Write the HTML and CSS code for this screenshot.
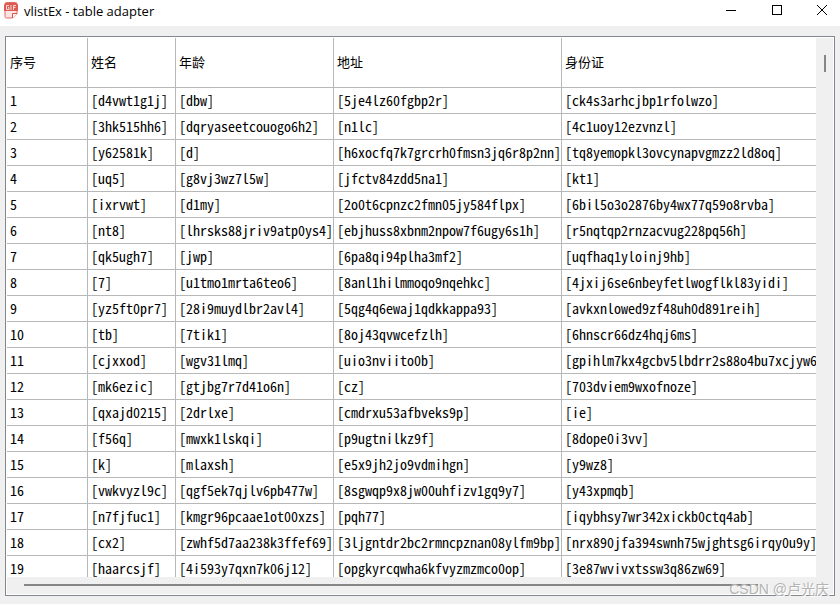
FILE: index.html
```
<!DOCTYPE html>
<html lang="zh-CN">
<head>
    <meta charset="utf-8">
    <title>vlistEx - table adapter</title>
    <link rel="stylesheet" href="styles.css">
</head>
<body>
    <!-- Title bar -->
    <header class="title-bar">
        <svg class="app-icon" width="14" height="17" viewBox="0 0 14 17">
            <path d="M2.500 .5h9a1.500 1.500 0 0 1 1.500 1.500v9.500L8.500 16h-6A1.500 1.500 0 0 1 1 14.500V2A1.500 1.500 0 0 1 2.500 .5z" fill="#fbe4e2" stroke="#e26a63"/>
            <path d="M2 1h10a1 1 0 0 1 1 1l1 1v6H0V3l1-1a1 1 0 0 1 1-1z" fill="#dd5a53"/>
            <path d="M5 3.500H2.500v4H5V5.500H4M7 3v5M9.500 8V3.500H12M9.500 5.500h2" fill="none" stroke="#fbd9d6"/>
            <path d="M8.500 16v-4.500H13" fill="#fff" stroke="#dd4f48"/>
        </svg>
        <h1>vlistEx - table adapter</h1>
        <div class="window-buttons">
            <button type="button" aria-label="Minimize">
                <svg width="12" height="12" viewBox="0 0 12 12"><path d="M1 6.500h10"/></svg>
            </button>
            <button type="button" aria-label="Maximize">
                <svg width="12" height="12" viewBox="0 0 12 12"><rect x="1.500" y="1.500" width="9" height="9"/></svg>
            </button>
            <button type="button" aria-label="Close">
                <svg width="12" height="12" viewBox="0 0 12 12"><path d="M1 1l10 10M11 1L1 11"/></svg>
            </button>
        </div>
    </header>

    <main class="list-box">
        <div class="list-view">
            <table>
                <colgroup>
                    <col class="col-index">
                    <col class="col-name">
                    <col class="col-age">
                    <col class="col-address">
                    <col>
                </colgroup>
                <thead>
                    <tr><th>序号</th><th>姓名</th><th>年龄</th><th>地址</th><th>身份证</th></tr>
                </thead>
                <tbody>
                    <tr><td>1</td><td>[d4vwt1g1j]</td><td>[dbw]</td><td>[5je4lz60fgbp2r]</td><td>[ck4s3arhcjbp1rfolwzo]</td></tr>
                    <tr><td>2</td><td>[3hk515hh6]</td><td>[dqryaseetcouogo6h2]</td><td>[n1lc]</td><td>[4c1uoy12ezvnzl]</td></tr>
                    <tr><td>3</td><td>[y62581k]</td><td>[d]</td><td>[h6xocfq7k7grcrh0fmsn3jq6r8p2nn]</td><td>[tq8yemopkl3ovcynapvgmzz2ld8oq]</td></tr>
                    <tr><td>4</td><td>[uq5]</td><td>[g8vj3wz7l5w]</td><td>[jfctv84zdd5na1]</td><td>[kt1]</td></tr>
                    <tr><td>5</td><td>[ixrvwt]</td><td>[d1my]</td><td>[2o0t6cpnzc2fmn05jy584flpx]</td><td>[6bil5o3o2876by4wx77q59o8rvba]</td></tr>
                    <tr><td>6</td><td>[nt8]</td><td>[lhrsks88jriv9atp0ys4]</td><td>[ebjhuss8xbnm2npow7f6ugy6s1h]</td><td>[r5nqtqp2rnzacvug228pq56h]</td></tr>
                    <tr><td>7</td><td>[qk5ugh7]</td><td>[jwp]</td><td>[6pa8qi94plha3mf2]</td><td>[uqfhaq1yloinj9hb]</td></tr>
                    <tr><td>8</td><td>[7]</td><td>[u1tmo1mrta6teo6]</td><td>[8anl1hilmmoqo9nqehkc]</td><td>[4jxij6se6nbeyfetlwogflkl83yidi]</td></tr>
                    <tr><td>9</td><td>[yz5ft0pr7]</td><td>[28i9muydlbr2avl4]</td><td>[5qg4q6ewaj1qdkkappa93]</td><td>[avkxnlowed9zf48uh0d891reih]</td></tr>
                    <tr><td>10</td><td>[tb]</td><td>[7tik1]</td><td>[8oj43qvwcefzlh]</td><td>[6hnscr66dz4hqj6ms]</td></tr>
                    <tr><td>11</td><td>[cjxxod]</td><td>[wgv31lmq]</td><td>[uio3nviito0b]</td><td>[gpihlm7kx4gcbv5lbdrr2s88o4bu7xcjyw6</td></tr>
                    <tr><td>12</td><td>[mk6ezic]</td><td>[gtjbg7r7d41o6n]</td><td>[cz]</td><td>[703dviem9wxofnoze]</td></tr>
                    <tr><td>13</td><td>[qxajd0215]</td><td>[2drlxe]</td><td>[cmdrxu53afbveks9p]</td><td>[ie]</td></tr>
                    <tr><td>14</td><td>[f56q]</td><td>[mwxk1lskqi]</td><td>[p9ugtnilkz9f]</td><td>[8dope0i3vv]</td></tr>
                    <tr><td>15</td><td>[k]</td><td>[mlaxsh]</td><td>[e5x9jh2jo9vdmihgn]</td><td>[y9wz8]</td></tr>
                    <tr><td>16</td><td>[vwkvyzl9c]</td><td>[qgf5ek7qjlv6pb477w]</td><td>[8sgwqp9x8jw00uhfizv1gq9y7]</td><td>[y43xpmqb]</td></tr>
                    <tr><td>17</td><td>[n7fjfuc1]</td><td>[kmgr96pcaae1ot00xzs]</td><td>[pqh77]</td><td>[iqybhsy7wr342xickb0ctq4ab]</td></tr>
                    <tr><td>18</td><td>[cx2]</td><td>[zwhf5d7aa238k3ffef69]</td><td>[3ljgntdr2bc2rmncpznan08ylfm9bp]</td><td>[nrx890jfa394swnh75wjghtsg6irqy0u9y]</td></tr>
                    <tr><td>19</td><td>[haarcsjf]</td><td>[4i593y7qxn7k06j12]</td><td>[opgkyrcqwha6kfvyzmzmco0op]</td><td>[3e87wvivxtssw3q86zw69]</td></tr>
                </tbody>
            </table>
        </div>
        <div class="scroll-y"><div class="thumb"></div></div>
        <div class="scroll-x"><div class="thumb"></div></div>
    </main>

    <div class="watermark">CSDN @卢光庆</div>
</body>
</html>
```
FILE: styles.css
```
* {
    box-sizing: border-box;
}

body {
    margin: 0;
    height: 100vh;
    display: flex;
    flex-direction: column;
    overflow: hidden;
    background-color: #f0f0f0;
    color: #000;
    font-family: "Noto Sans Mono CJK SC", "Liberation Mono", "Noto Sans CJK SC", monospace;
    font-size: 14px;
}

/* Title bar */
.title-bar {
    display: flex;
    align-items: center;
    flex: none;
    height: 26px;
    padding-left: 4px;
    background-color: #fff;
}

.app-icon {
    margin-bottom: 5px;
}

.title-bar h1 {
    flex: 1;
    margin: 0 0 4px 6px;
    font-family: "Open Sans", "Noto Sans", sans-serif;
    font-size: 13px;
    font-weight: normal;
    line-height: 18px;
}

.window-buttons {
    display: flex;
    margin-bottom: 6px;
}

.window-buttons button {
    display: flex;
    align-items: center;
    justify-content: center;
    width: 46px;
    height: 20px;
    padding: 0;
    border: none;
    background: none;
}

.window-buttons button:last-child {
    width: 40px;
    padding-left: 4px;
}

.window-buttons path,
.window-buttons rect {
    fill: none;
    stroke: #000;
}

/* List box with its scrollbars */
.list-box {
    display: grid;
    grid-template-columns: 1fr 17px;
    grid-template-rows: 1fr 17px;
    flex: 1;
    min-height: 0;
    margin: 10px 5px 8px;
    padding: 1px;
    border: 1px solid #828790;
    background-color: #fff;
}

.list-view {
    min-width: 0;
    min-height: 0;
    overflow: hidden;
}

table {
    width: 100%;
    table-layout: fixed;
    border-collapse: separate;
    border-spacing: 0;
}

.col-index {
    width: 81px;
}

.col-name {
    width: 88px;
}

.col-age {
    width: 158px;
}

.col-address {
    width: 228px;
}

th,
td {
    height: 26px;
    padding: 0 0 2px 3px;
    border-right: 1px solid #b8b8b8;
    border-bottom: 1px solid #b8b8b8;
    font-weight: normal;
    line-height: 16px;
    text-align: left;
    white-space: nowrap;
    overflow: hidden;
}

th {
    height: 50px;
    font-size: 13px;
}

th:last-child,
td:last-child {
    border-right: none;
}

.scroll-y,
.scroll-x {
    background-color: #f0f0f0;
}

.scroll-x {
    grid-column: 1 / 3;
    padding: 7px 75px 0 17px;
}

.scroll-y {
    padding: 17px 0 0 8px;
}

.thumb {
    height: 2px;
    background-color: #868686;
}

.scroll-y .thumb {
    width: 2px;
    height: 17px;
}

.watermark {
    position: absolute;
    right: 11px;
    bottom: 5px;
    color: #b4b4b4;
    font-family: "Liberation Sans", "Noto Sans CJK SC", sans-serif;
    font-size: 14px;
    line-height: 20px;
    text-shadow: 1px 1px 0 #fff;
}
```
